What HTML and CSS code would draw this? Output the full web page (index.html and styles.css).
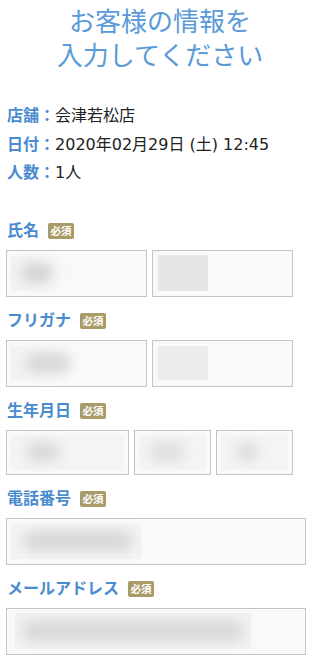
FILE: index.html
```html
<!DOCTYPE html>
<html lang="ja">
<head>
<meta charset="utf-8">
<meta name="viewport" content="width=device-width, initial-scale=1">
<title>お客様の情報を入力してください</title>
<link rel="stylesheet" href="styles.css">
</head>
<body>
<h1 class="title">お客様の情報を<br>入力してください</h1>

<div class="info">
  <div class="info-row"><span class="info-key">店舗：</span><span class="info-val">会津若松店</span></div>
  <div class="info-row"><span class="info-key">日付：</span><span class="info-val">2020年02月29日 (土) 12:45</span></div>
  <div class="info-row"><span class="info-key">人数：</span><span class="info-val">1人</span></div>
</div>

<form class="form">
  <div class="field">
    <div class="field-head"><span class="field-label">氏名</span><span class="badge">必須</span></div>
    <div class="inputs">
      <div class="box w-half"><span class="ph ph-wash"><span class="blob b-name1"></span></span></div>
      <div class="box w-half"><span class="rect r-name2"></span></div>
    </div>
  </div>

  <div class="field">
    <div class="field-head"><span class="field-label">フリガナ</span><span class="badge">必須</span></div>
    <div class="inputs">
      <div class="box w-half"><span class="ph ph-wash"><span class="blob b-kana1"></span></span></div>
      <div class="box w-half"><span class="rect r-kana2"></span></div>
    </div>
  </div>

  <div class="field">
    <div class="field-head"><span class="field-label">生年月日</span><span class="badge">必須</span></div>
    <div class="inputs">
      <div class="box box-sm w-year"><span class="ph ph-fill"><span class="blob b-year"></span></span></div>
      <div class="box box-sm w-md"><span class="ph ph-fill"><span class="blob b-md"></span></span></div>
      <div class="box box-sm w-md"><span class="ph ph-fill"><span class="blob b-day"></span></span></div>
    </div>
  </div>

  <div class="field">
    <div class="field-head"><span class="field-label">電話番号</span><span class="badge">必須</span></div>
    <div class="inputs">
      <div class="box w-full"><span class="ph ph-wash-long"><span class="blob b-tel"></span></span></div>
    </div>
  </div>

  <div class="field">
    <div class="field-head"><span class="field-label">メールアドレス</span><span class="badge">必須</span></div>
    <div class="inputs">
      <div class="box w-full"><span class="ph ph-mail"><span class="blob b-mail"></span></span></div>
    </div>
  </div>
</form>
</body>
</html>
```

FILE: styles.css
```css
html {
  overflow: hidden;
}

body {
  margin: 0;
  padding: 0 6px;
  background: #ffffff;
  color: #222222;
  font-family: "Noto Sans CJK JP", "Noto Sans", sans-serif;
}

.title {
  margin: 0;
  padding-top: 3px;
  text-align: center;
  font-size: 26px;
  line-height: 34px;
  font-weight: 400;
  color: #5a9ad8;
}

.info {
  margin-top: 29px;
}

.info-row {
  display: flex;
  align-items: center;
  height: 28.5px;
  font-size: 16px;
  padding-left: 1px;
}

.info-key {
  font-weight: 700;
  color: #4a8bd0;
}

.info-val {
  color: #222222;
  font-family: "DejaVu Sans", "Noto Sans CJK JP", sans-serif;
  font-size: 16px;
}

.form {
  margin-top: 34px;
  width: 300px;
}

.field {
  margin-bottom: 13px;
}

.field-head {
  display: flex;
  align-items: center;
  height: 22px;
  margin-bottom: 8px;
  padding-left: 1px;
}

.field-label {
  font-size: 16px;
  line-height: 20px;
  font-weight: 700;
  color: #4a8bd0;
  margin-top: -3px;
}

.badge {
  margin-left: 9px;
  width: 26px;
  height: 16px;
  border-radius: 2px;
  background: #a89b68;
  color: #ffffff;
  font-size: 10.5px;
  line-height: 16px;
  text-align: center;
  font-weight: 700;
}

.inputs {
  display: flex;
  gap: 5px;
}

.box {
  box-sizing: border-box;
  height: 47px;
  border: 1px solid #c4c4c4;
  background: #f9f9f9;
  display: flex;
  align-items: center;
  padding: 0 4px;
  overflow: hidden;
}

.box-sm {
  height: 45px;
}

.w-half {
  width: 141px;
}

.w-year {
  width: 123px;
}

.w-md {
  width: 77px;
}

.w-full {
  width: 300px;
}

.ph {
  display: flex;
  align-items: center;
  height: 35px;
}

.ph-wash {
  width: 64px;
  background: linear-gradient(to right, #f2f2f2, #f9f9f9);
}

.ph-wash-long {
  width: 130px;
  background: #f3f3f3;
}

.ph-fill {
  width: 100%;
  background: #f4f4f4;
}

.ph-mail {
  width: 236px;
  height: 36px;
  margin-left: 4px;
  background: #f1f1f1;
}

.blob {
  display: block;
  height: 20px;
  border-radius: 10px;
  background: #d4d4d4;
  filter: blur(6px);
}

.b-name1 {
  width: 32px;
  margin-left: 10px;
}

.b-kana1 {
  width: 46px;
  margin-left: 14px;
  background: #d8d8d8;
}

.b-year {
  width: 36px;
  margin-left: 14px;
  background: #dadada;
}

.b-md {
  width: 36px;
  margin-left: 10px;
  background: #e0e0e0;
}

.b-day {
  width: 24px;
  margin-left: 14px;
  background: #dedede;
}

.b-tel {
  width: 110px;
  margin-left: 12px;
  background: #d8d8d8;
}

.b-mail {
  width: 220px;
  margin-left: 8px;
  background: #d8d8d8;
}

.rect {
  display: block;
  width: 50px;
  height: 36px;
  margin-left: 1px;
}

.r-name2 {
  background: #e6e6e6;
}

.r-kana2 {
  background: #ececec;
  height: 34px;
}
```
